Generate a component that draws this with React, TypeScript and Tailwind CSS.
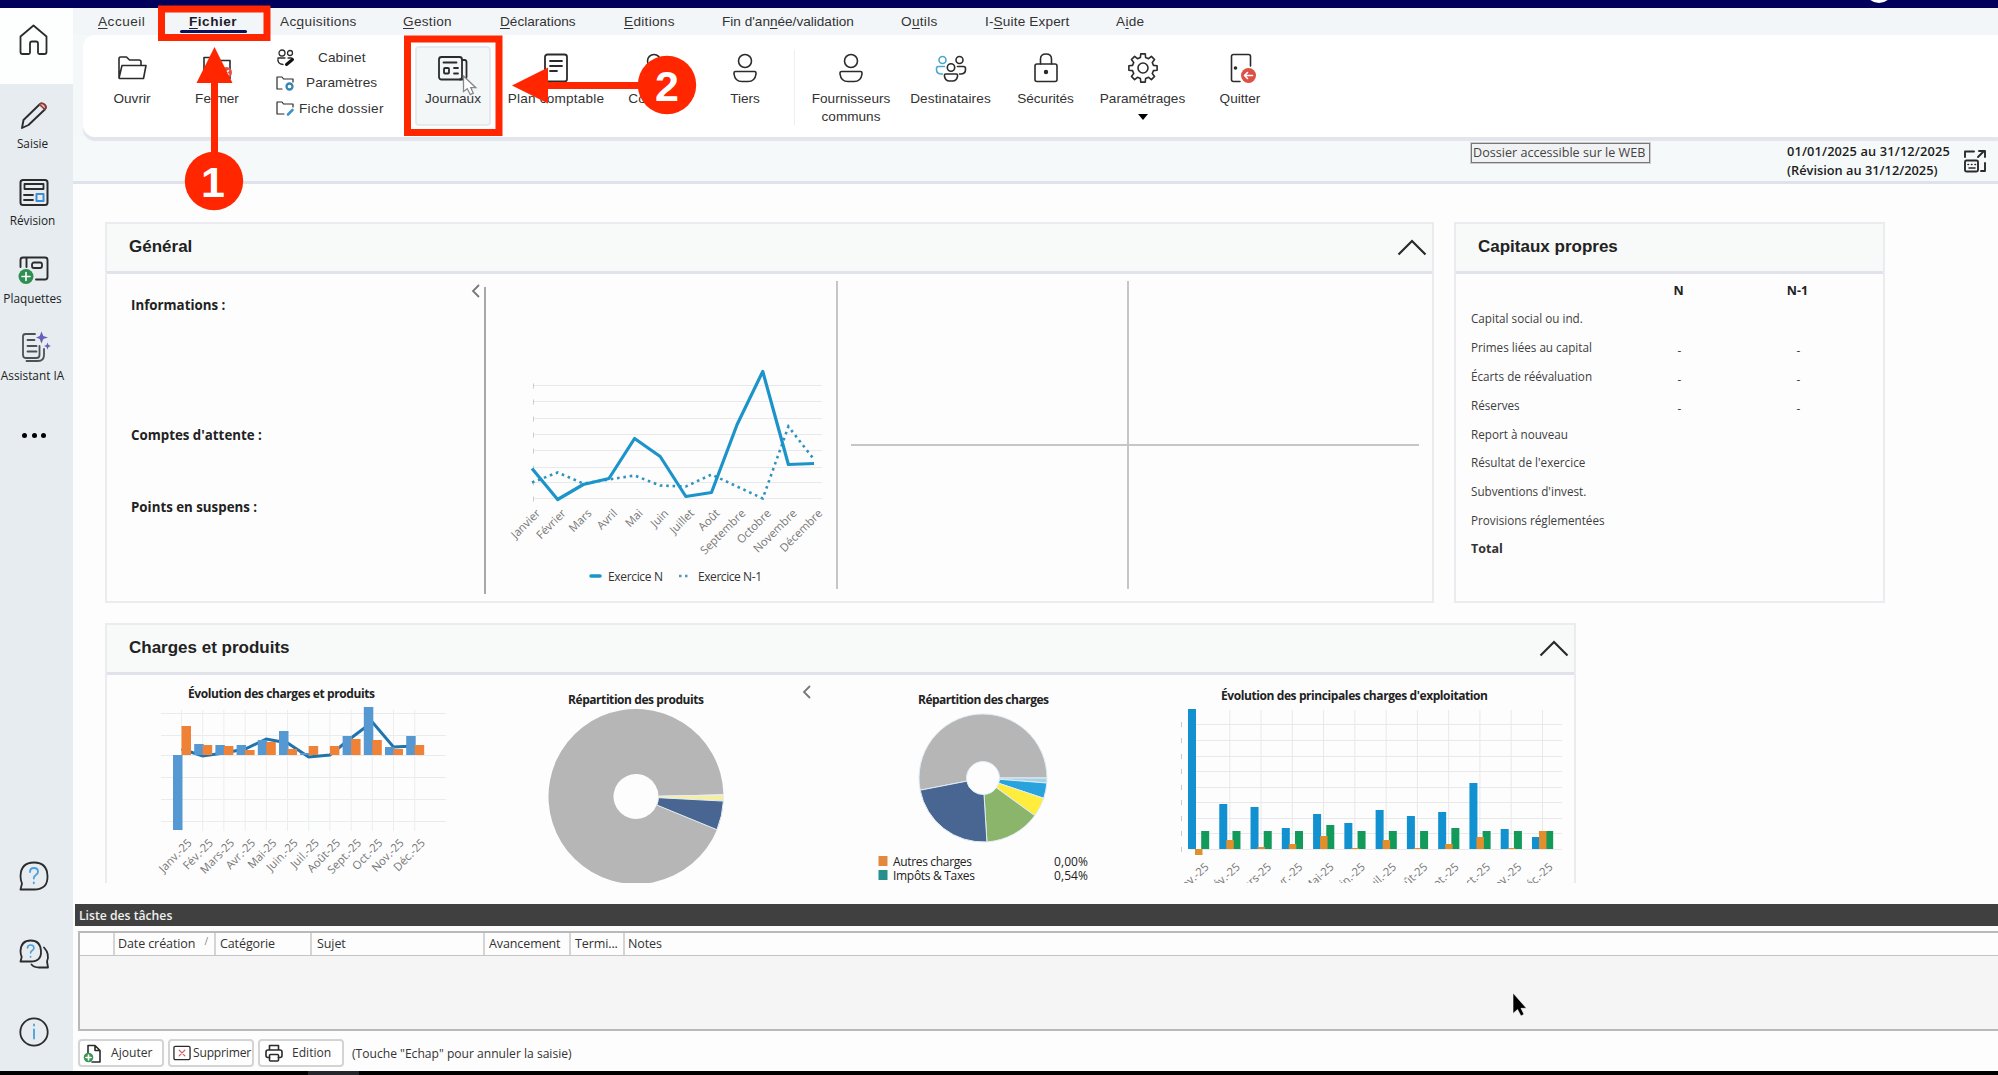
import type { ReactNode } from "react";
import { clsx } from "clsx";

type MenuItem = { before: string; key: string; after: string; width: string; active?: boolean };

const menuItems: MenuItem[] = [
  { before: "", key: "A", after: "ccueil", width: "w-[91px] tracking-[0.500px]" },
  { before: "", key: "F", after: "ichier", width: "w-[91px] tracking-[0.500px]", active: true },
  { before: "Ac", key: "q", after: "uisitions", width: "w-[123px] tracking-[0.350px]" },
  { before: "", key: "G", after: "estion", width: "w-[97px] tracking-[0.300px]" },
  { before: "", key: "D", after: "éclarations", width: "w-[124px]" },
  { before: "", key: "E", after: "ditions", width: "w-[98px] tracking-[0.300px]" },
  { before: "Fin d'an", key: "n", after: "ée/validation", width: "w-[179px]" },
  { before: "O", key: "u", after: "tils", width: "w-[84px] tracking-[0.300px]" },
  { before: "I-", key: "S", after: "uite Expert", width: "w-[131px] tracking-[0.150px]" },
  { before: "A", key: "i", after: "de", width: "w-[60px] tracking-[0.300px]" },
];

const equityRows = [
  { label: "Capital social ou ind.", n: "", n1: "" },
  { label: "Primes liées au capital", n: "-", n1: "-" },
  { label: "Écarts de réévaluation", n: "-", n1: "-" },
  { label: "Réserves", n: "-", n1: "-" },
  { label: "Report à nouveau", n: "", n1: "" },
  { label: "Résultat de l'exercice", n: "", n1: "" },
  { label: "Subventions d'invest.", n: "", n1: "" },
  { label: "Provisions réglementées", n: "", n1: "" },
];

const months = ["Janvier", "Février", "Mars", "Avril", "Mai", "Juin", "Juillet", "Août", "Septembre", "Octobre", "Novembre", "Décembre"];
const shortMonths = ["Janv.-25", "Fév.-25", "Mars-25", "Avr.-25", "Mai-25", "Juin.-25", "Juil.-25", "Août-25", "Sept.-25", "Oct.-25", "Nov.-25", "Déc.-25"];

const yearN = [468, 499, 484, 478, 438, 456, 496, 492, 424, 371, 464, 463];
const yearN1 = [482, 472, 483, 479, 475, 485, 486, 474, 486, 498, 426, 459];

// [produits, charges, résultat], y positions around the 755 baseline
const evolution = [
  [830, 726, 749], [744, 745, 756], [745, 746, 753], [745, 750, 749],
  [740, 742, 739], [731, 749, 743], [753, 746, 757], [755, 746, 755],
  [736, 739, 738], [707, 740, 722], [747, 749, 747], [736, 745, 746],
];

// [bleu, orange, vert], y positions around the 849 baseline
const expenses = [
  [709, 855, 831], [804, 840, 831], [807, 847, 831], [828, 844, 831],
  [814, 836, 825], [823, 848, 831], [810, 840, 831], [816, 848, 831],
  [812, 844, 828], [783, 837, 831], [829, 848, 831], [837, 831, 831],
];

function slice(cx: number, cy: number, r: number, hole: number, from: number, to: number) {
  const at = (radius: number, deg: number) => {
    const a = (deg * Math.PI) / 180;
    return `${(cx + radius * Math.cos(a)).toFixed(2)} ${(cy + radius * Math.sin(a)).toFixed(2)}`;
  };
  const large = to - from > 180 ? 1 : 0;
  return `M${at(hole, from)} L${at(r, from)} A${r} ${r} 0 ${large} 1 ${at(r, to)} L${at(hole, to)} A${hole} ${hole} 0 ${large} 0 ${at(hole, from)}Z`;
}

const barProps = (base: number, value: number) => ({ y: Math.min(base, value), height: Math.abs(base - value) });

/* ---------- icons ---------- */

function Icon({ children, className, box = "0 0 30 30" }: { children: ReactNode; className?: string; box?: string }) {
  return (
    <svg viewBox={box} className={clsx("shrink-0 overflow-visible", className)} fill="none" stroke="#2b2b2b" strokeWidth={1.6} strokeLinecap="round" strokeLinejoin="round">
      {children}
    </svg>
  );
}

const FolderIcon = () => (
  <Icon className="size-[30px]">
    <path d="M2 25V5.500q0-1.500 1.500-1.500h6l3 3h9.500q2 0 2 2v3M2 25l3-12.500h24L26.500 25.500H2.500" />
  </Icon>
);
const FolderCloseIcon = () => (
  <Icon className="size-[30px]">
    <path d="M2 25.500V4.500h8l3 3h15v18z" />
    <circle cx="24.500" cy="19.500" r="5.500" fill="#e0524a" stroke="none" />
    <path d="m22.500 17.500 4 4m0-4-4 4" stroke="#fff" />
  </Icon>
);
const JournalIcon = () => (
  <Icon className="size-[30px]">
    <rect x="1" y="4" width="23" height="22.500" rx="2.500" strokeWidth={1.800} />
    <path d="M24.500 7h2q2 0 2 2v14.500q0 3-2.500 3h-4M5.500 9.500h13M16 15h4M16 20.500h4" strokeWidth={1.800} />
    <rect x="6" y="15" width="5" height="5.500" rx="1" strokeWidth={1.800} />
  </Icon>
);
const DocumentIcon = () => (
  <Icon className="size-[30px]">
    <rect x="4" y="1.500" width="22" height="27" rx="2.500" strokeWidth={1.800} />
    <path d="M9 8h12M9 13h12M9 18h7" strokeWidth={1.800} />
  </Icon>
);
const UserIcon = () => (
  <Icon className="size-[30px]">
    <circle cx="15" cy="8" r="6.500" />
    <path d="M4 20q0-1.500 1.500-1.500h19q1.500 0 1.500 1.500v1q-1 7.500-8 7.500h-6q-7 0-8-7.500z" />
  </Icon>
);
const GroupIcon = () => (
  <Icon className="size-[30px]">
    <g stroke="#4fa6cf">
      <circle cx="6.500" cy="7" r="3.500" />
      <path d="M8.500 13.500H2.500q-2 0-2 2v1q0 4 4 4.500h2" />
    </g>
    <circle cx="23.500" cy="7" r="3.500" />
    <path d="M21.500 13.500h6q2 0 2 2v1q0 4-4 4.500h-2" />
    <circle cx="15" cy="14.500" r="3.700" />
    <path d="M8.500 22q0-1 1-1h11q1 0 1 1v1.500q-1 4.500-5 4.500h-3q-4 0-5-4.500z" />
  </Icon>
);
const LockIcon = () => (
  <Icon className="size-[30px]">
    <rect x="4" y="11" width="22" height="17.500" rx="2" />
    <path d="M9.500 11V6q0-5 5.500-5t5.500 5v5" />
    <circle cx="15" cy="19" r="1.400" fill="#2b2b2b" />
  </Icon>
);

// eight-toothed outline, each tooth is four points of a polar path
const gearPath = (() => {
  const pts: string[] = [];
  for (let i = 0; i < 8; i++) {
    for (const [r, off] of [[10.8, -14], [14.3, -9], [14.3, 9], [10.8, 14]]) {
      const a = ((i * 45 + off) * Math.PI) / 180;
      pts.push(`${(15 + r * Math.cos(a)).toFixed(2)} ${(15 + r * Math.sin(a)).toFixed(2)}`);
    }
  }
  return `M${pts.join("L")}Z`;
})();

const GearIcon = () => (
  <Icon className="size-[30px]">
    <path d={gearPath} />
    <circle cx="15" cy="15" r="5" />
  </Icon>
);
const DoorIcon = () => (
  <Icon className="size-[30px]">
    <path d="M15 28.500H8.500q-2 0-2-2V3.500q0-2 2-2h15q2 0 2 2V13" />
    <circle cx="10.500" cy="15" r="1" fill="#2b2b2b" />
    <circle cx="23.500" cy="22.500" r="7.500" fill="#dc5046" stroke="none" />
    <path d="M27.500 22.500h-8m3-3-3 3 3 3" stroke="#fff" />
  </Icon>
);
const HomeIcon = () => (
  <Icon className="size-[30px]">
    <path d="M1.500 12.500 14.500 1.500l13 11V28q0 2-2 2H20.500q-1.500 0-1.500-1.500V19.500q0-2-2-2H13q-2 0-2 2V28.500q0 1.500-1.500 1.500H3.500q-2 0-2-2z" strokeWidth={1.800} />
  </Icon>
);
const PencilIcon = () => (
  <Icon className="size-[30px]">
    <path d="M4.500 20 20.500 4.500q2.500-2.200 5 .2t.3 4.800L9.500 25l-6.500 3z" strokeWidth={1.900} />
    <path d="m20.500 4.500 5.300 5q2.200-2.400-.3-4.800t-5-.2z" fill="#f0b8b8" stroke="#8d3a3a" />
  </Icon>
);
const RevisionIcon = () => (
  <Icon className="size-[30px]">
    <rect x="1.500" y="3" width="27" height="25" rx="2.500" strokeWidth={2} />
    <rect x="5.500" y="7" width="19" height="5" strokeWidth={1.800} />
    <path d="M5 18h9M5 23h9" strokeWidth={1.800} />
    <rect x="17.500" y="17" width="7" height="7" stroke="#3f8fd0" strokeWidth={2} />
  </Icon>
);
const PlaquettesIcon = () => (
  <Icon className="size-[30px]">
    <path d="M1.500 12V5q0-2.500 2.500-2.500h22q2.500 0 2.500 2.500v17q0 2.500-2.500 2.500H17M7.500 3v9" strokeWidth={1.900} />
    <rect x="13" y="7.500" width="10" height="5.500" rx="2" strokeWidth={1.800} />
    <circle cx="7" cy="21.500" r="7.500" fill="#2f8f52" stroke="none" />
    <path d="M7 17.500v8M3 21.500h8" stroke="#fff" />
  </Icon>
);
const AssistantIcon = () => (
  <Icon className="h-[32px] w-[30px]" box="0 0 30 32">
    <path d="M16 4H6.500Q4 4 4 6.500v18Q4 28 6.500 28h11q3 0 3-3v-9M7.500 31H19q6 0 6-6v-6M8.500 10h7M8.500 16h9M8.500 21.500h9" stroke="#4a5157" strokeWidth={1.800} />
    <path d="M22.500 1.500 24.300 6l4.700 1.500-4.700 1.500-1.800 4.500L20.700 9 17 7.500 20.700 6zM28.500 12.500l1 2.500 2.500 1-2.500 1-1 2.500-1-2.500-2.500-1 2.500-1z" fill="#6a5fb8" stroke="none" />
  </Icon>
);
const HelpIcon = () => (
  <Icon className="size-[30px]">
    <path d="M1.500 28.500 3 22.500Q1.500 19 1.500 15 2 1.500 15 1.500T28.500 15 15 28.500z" strokeWidth={1.800} />
    <path d="M11 11q0-4 4-4t4 3.700q0 2-2.200 3.300T14.800 17.500M14.800 21.500v.8" stroke="#4b9fd8" strokeWidth={1.800} />
  </Icon>
);
const ChatIcon = () => (
  <Icon className="size-[30px]">
    <path d="M1.500 22.500 2.700 18Q1.500 15.500 1.500 12 2 1.500 11.700 1.500T22 12 11.700 22.500z" strokeWidth={1.800} />
    <path d="M8.500 9q0-3 3.200-3t3.200 3q0 1.500-1.700 2.500T11.600 14M11.600 17.500v.6" stroke="#4b9fd8" strokeWidth={1.600} />
    <path d="M25 8.500Q31 15 28 22.500l1 6H20q-5 0-7.500-3" strokeWidth={1.800} />
  </Icon>
);
const InfoIcon = () => (
  <Icon className="size-[30px]">
    <circle cx="15" cy="15" r="13.700" strokeWidth={1.800} />
    <path d="M15 12.500v9M15 7.500v1" stroke="#4b9fd8" strokeWidth={1.800} />
  </Icon>
);
const ChevronUp = () => (
  <svg viewBox="0 0 30 17" className="h-[17px] w-[30px]" fill="none" stroke="#2a2a2a" strokeWidth={2.200}>
    <path d="m1.500 15.500 13.500-13.500 13.500 13.500" />
  </svg>
);
const ChevronLeft = () => (
  <svg viewBox="0 0 9 14" className="h-[14px] w-[9px]" fill="none" stroke="#777" strokeWidth={1.800}>
    <path d="M8 1 2 7l6 6" />
  </svg>
);

/* ---------- chrome ---------- */

function SideButton({ icon, label, className }: { icon: ReactNode; label?: string; className: string }) {
  return (
    <button type="button" className={clsx("flex w-[68px] shrink-0 flex-col items-center", className)}>
      {icon}
      {label && <span className="mt-[5px] mr-[3px] text-[11.800px] leading-4 whitespace-nowrap text-[#222]">{label}</span>}
    </button>
  );
}

function Sidebar() {
  return (
    <aside className="flex w-[73px] shrink-0 flex-col bg-[#e6ecf0]">
      <div className="h-[76px] bg-[#fdfefe] pt-[16px]">
        <SideButton className="h-[32px]" icon={<HomeIcon />} />
      </div>
      <SideButton className="mt-[16px] h-[77px]" icon={<PencilIcon />} label="Saisie" />
      <SideButton className="h-[78px]" icon={<RevisionIcon />} label="Révision" />
      <SideButton className="h-[75px]" icon={<PlaquettesIcon />} label="Plaquettes" />
      <SideButton className="h-[98px]" icon={<AssistantIcon />} label="Assistant IA" />
      <div className="flex w-[68px] justify-center gap-[4.500px] pt-[5px]">
        <span className="size-[5px] rounded-full bg-black" />
        <span className="size-[5px] rounded-full bg-black" />
        <span className="size-[5px] rounded-full bg-black" />
      </div>
      <div className="mt-auto flex flex-col gap-[48px] pb-[24px]">
        <SideButton className="h-[30px]" icon={<HelpIcon />} />
        <SideButton className="h-[30px]" icon={<ChatIcon />} />
        <SideButton className="h-[30px]" icon={<InfoIcon />} />
      </div>
    </aside>
  );
}

function MenuBar() {
  return (
    <nav className="flex h-[27px] shrink-0 items-start bg-[#f3f6f8] pt-[6px] pl-[25px] font-['Liberation_Sans',sans-serif] text-[13.600px] leading-4 text-[#333]">
      {menuItems.map((item) => (
        <div key={item.after} className={clsx("shrink-0 whitespace-nowrap", item.width)}>
          <span className={clsx(item.active && "font-bold text-[#1c1c2e]")}>
            {item.before}
            <span className="underline underline-offset-2">{item.key}</span>
            {item.after}
          </span>
          {item.active && <div className="-ml-[9px] h-[3px] w-[67px] rounded-full bg-[#0b1058]" />}
        </div>
      ))}
    </nav>
  );
}

function Tool({ icon, label, className, children }: { icon: ReactNode; label: string; className: string; children?: ReactNode }) {
  return (
    <div className={clsx("flex shrink-0 flex-col items-center pt-[18px]", className)}>
      {icon}
      <span className="mt-[7px] text-center leading-[17.500px] whitespace-pre">{label}</span>
      {children}
    </div>
  );
}

function Ribbon() {
  return (
    <div className="relative ml-[10px] flex h-[102px] shrink-0 rounded-l-xl bg-white pl-[6px] font-['Liberation_Sans',sans-serif] text-[13.600px] text-[#333] shadow-[0_4px_1px_#e3e5ed]">
      <Tool className="w-[86px]" icon={<FolderIcon />} label="Ouvrir" />
      <Tool className="w-[84px]" icon={<FolderCloseIcon />} label="Fermer" />
      <div className="flex w-[145px] shrink-0 flex-col gap-[6.500px] pt-[13px] pl-[17px] leading-4 whitespace-nowrap">
        <div className="flex items-center gap-[23px]">
          <Icon className="size-[19px]" box="0 0 19 17">
            <circle cx="6" cy="4" r="3" strokeWidth={1.300} />
            <circle cx="14" cy="4" r="2.500" strokeWidth={1.300} />
            <path d="M9 9H2q-1 6 5 6.500M12 9h4" strokeWidth={1.300} />
            <path d="m10.500 15.500 6-5" stroke="#111" strokeWidth={3} />
          </Icon>
          <span className="tracking-[0.100px]">Cabinet</span>
        </div>
        <div className="flex items-center gap-[11px]">
          <Icon className="size-[19px]" box="0 0 19 17">
            <path d="M1 14V2h5l1.500 2H17v3M1 14h5" strokeWidth={1.200} />
            <circle cx="13.500" cy="11.500" r="3" stroke="#3585b5" strokeWidth={2.300} />
          </Icon>
          <span className="tracking-[0.100px]">Paramètres</span>
        </div>
        <div className="flex items-center gap-[4px]">
          <Icon className="size-[19px]" box="0 0 19 17">
            <path d="M1 14V2h5l1.500 2H17v3M1 14h7" strokeWidth={1.200} />
            <path d="m12 14.500 4.500-4.500" stroke="#3f94cf" strokeWidth={2.600} />
          </Icon>
          <span className="tracking-[0.300px]">Fiche dossier</span>
        </div>
      </div>
      <div className="flex w-[98px] shrink-0 justify-center pt-[11px]">
        <div className="flex h-[80px] w-[76px] flex-col items-center rounded-sm border-2 border-[#e4eaee] bg-[#f3f7f8] pt-[5px]">
          <JournalIcon />
          <span className="mt-[7px] leading-[17.500px]">Journaux</span>
        </div>
      </div>
      <Tool className="w-[108px] tracking-[0.200px]" icon={<DocumentIcon />} label="Plan comptable" />
      <Tool className="w-[88px]" icon={<UserIcon />} label="Contrats" />
      <Tool className="w-[94px]" icon={<UserIcon />} label="Tiers" />
      <div className="mt-[15px] ml-[2px] h-[75px] w-px shrink-0 bg-[#eceef0]" />
      <Tool className="w-[112px]" icon={<UserIcon />} label={"Fournisseurs\ncommuns"} />
      <Tool className="w-[87px] tracking-[0.100px]" icon={<GroupIcon />} label="Destinataires" />
      <Tool className="w-[103px]" icon={<LockIcon />} label="Sécurités" />
      <Tool className="w-[91px]" icon={<GearIcon />} label="Paramétrages">
        <div className="mt-[6px] h-0 w-0 border-x-[5px] border-t-[6px] border-x-transparent border-t-black" />
      </Tool>
      <Tool className="w-[104px]" icon={<DoorIcon />} label="Quitter" />
    </div>
  );
}

function StatusBand() {
  return (
    <div className="flex h-[47px] shrink-0 border-b-[3px] border-[#e0e2eb] bg-[#f5f9f9] pt-[6px]">
      <div className="ml-[1398px] h-[20px] w-[179px] shrink-0 border border-[#777] bg-[#f1f2f3] pl-[1px] text-[12.600px] leading-[17px] whitespace-nowrap text-[#444] outline outline-[#ccc]">
        Dossier accessible sur le WEB
      </div>
      <div className="ml-[137px] w-[177px] shrink-0 text-[12.800px] leading-[19px] font-semibold tracking-[0.150px] whitespace-nowrap text-[#1c1c1c]">
        <p className="-mt-px">01/01/2025 au 31/12/2025</p>
        <p className="tracking-normal">(Révision au 31/12/2025)</p>
      </div>
      <Icon className="mt-[7px] h-[23px] w-[22px]" box="0 0 22 23">
        <path d="M1 7V1.500h9M14 7l6-6M15 1h6v6M21 13v8h-4" strokeWidth={1.900} />
        <rect x="1" y="10.500" width="13" height="11" rx="1.500" strokeWidth={1.900} />
        <path d="M4 14.500h.5m3 0h.5m3 0h.5M5 18h6" />
      </Icon>
    </div>
  );
}

/* ---------- dashboard ---------- */

function CardHeader({ title, collapsible }: { title: string; collapsible?: boolean }) {
  return (
    <header className="flex h-[50px] shrink-0 items-center justify-between border-b-[3px] border-[#e1e3eb] bg-[#f8faf9] pr-[5px] pb-px pl-[22px]">
      <h2 className="font-['Liberation_Sans',sans-serif] text-[17px] font-bold text-[#222]">{title}</h2>
      {collapsible && <ChevronUp />}
    </header>
  );
}

function YearChart() {
  const x = (i: number) => 532 + i * 25.64;
  const points = (values: number[]) => values.map((y, i) => `${x(i)},${y}`).join(" ");
  return (
    <svg viewBox="486 273.500 350 325" className="h-[325px] w-[350px] shrink-0" fontSize="12.500" fill="#777">
      {[385, 401, 418, 434, 450, 467, 482, 498].map((y) => (
        <g key={y}>
          <path d={`M533 ${y}H822`} stroke="#e9e9e9" />
          <path d={`M533.500 ${y - 2}v5`} stroke="#ccc" />
        </g>
      ))}
      <polyline points={points(yearN1)} fill="none" stroke="#2f93bd" strokeWidth="2.600" strokeDasharray="2.600 3.800" />
      <polyline points={points(yearN)} fill="none" stroke="#1c94c9" strokeWidth="3.200" strokeLinejoin="round" />
      {months.map((m, i) => (
        <text key={m} fontSize="11.300" textAnchor="end" transform={`translate(${x(i) + 9} 513.500) rotate(-45)`}>{m}</text>
      ))}
      <path d="M591 575.500h9" stroke="#1c94c9" strokeWidth="3.500" strokeLinecap="round" />
      <path d="M679 575.500h10" stroke="#5b93b5" strokeWidth="2.500" strokeDasharray="2.500 3.500" />
      <g fill="#333" fontSize="12">
        <text x="608" y="580" textLength="55">Exercice N</text>
        <text x="698" y="580" textLength="64">Exercice N-1</text>
      </g>
    </svg>
  );
}

function GeneralCard() {
  return (
    <section className="flex h-[381px] w-[1329px] shrink-0 flex-col border-2 border-[#ebecef]">
      <CardHeader title="Général" collapsible />
      <div className="flex min-h-0 flex-1">
        <div className="w-[364px] shrink-0 pt-[20px] pl-[24px] text-[13.300px] leading-[22px] font-bold text-[#222]">
          <p>Informations :</p>
          <p className="mt-[108px]">Comptes d'attente :</p>
          <p className="mt-[50px]">Points en suspens :</p>
        </div>
        <div className="w-[13px] shrink-0 pt-[10px]">
          <ChevronLeft />
        </div>
        <div className="mt-[13px] h-[307px] w-[2px] shrink-0 bg-[#a9a9a9]" />
        <YearChart />
        <div className="mt-[7px] h-[308px] w-[2px] shrink-0 bg-[#c6c6c6]" />
        {/* four empty quadrants */}
        <div className="mt-[7px] ml-[13px] grid h-[308px] w-[568px] shrink-0 grid-cols-[278px_1fr] grid-rows-[165px_1fr]">
          <div className="border-r-2 border-b-2 border-[#c6c6c6]" />
          <div className="border-b-2 border-[#c6c6c6]" />
          <div className="border-r-2 border-[#c6c6c6]" />
        </div>
      </div>
    </section>
  );
}

function EquityCard() {
  return (
    <section className="flex h-[381px] w-[431px] shrink-0 flex-col border-2 border-[#ebecef]">
      <CardHeader title="Capitaux propres" />
      <div className="grid grid-cols-[148px_119px_119px] pt-[7px] pl-[15px] text-[11.700px] leading-[20px] text-[#3d3d3d]">
        <div className="h-[27px]" />
        <div className="text-center text-[12.500px] font-bold text-[#222]">N</div>
        <div className="text-center text-[12.500px] font-bold text-[#222]">N-1</div>
        {equityRows.map((row) => (
          <div key={row.label} className="contents">
            <div className="h-[28.900px] whitespace-nowrap">{row.label}</div>
            <div className="pt-[3px] pl-[2px] text-center">{row.n}</div>
            <div className="pt-[3px] pl-[2px] text-center">{row.n1}</div>
          </div>
        ))}
        <div className="text-[12.500px] font-bold text-[#333]">Total</div>
      </div>
    </section>
  );
}

function EvolutionChart() {
  const x = (i: number) => 181.5 + i * 21.2;
  return (
    <svg viewBox="107 675 430 208" className="h-[208px] w-[430px] shrink-0" fontSize="12" fill="#777">
      <text x="188" y="698" fontWeight="bold" fill="#222" textLength="187">Évolution des charges et produits</text>
      {[713, 735, 755, 777, 799, 821].map((y) => <path key={y} d={`M161 ${y}.5H446`} stroke="#e8ecee" />)}
      {evolution.map((_, i) => <path key={i} d={`M${x(i)} 710V831`} stroke="#ebeeef" />)}
      <polyline points={evolution.map((v, i) => `${x(i)},${v[2]}`).join(" ")} fill="none" stroke="#1f74ad" strokeWidth="3" />
      {evolution.map(([income, cost], i) => (
        <g key={i}>
          <rect x={x(i) - 8.5} width="9.500" {...barProps(755, income)} fill="#5698d2" />
          <rect x={x(i)} width="9.500" {...barProps(755, cost)} fill="#f08238" />
        </g>
      ))}
      {shortMonths.map((m, i) => (
        <text key={m} fontSize="11.300" textAnchor="end" transform={`translate(${x(i) + 11} 843.500) rotate(-46)`}>{m}</text>
      ))}
    </svg>
  );
}

function IncomeDonut() {
  const arc = (from: number, to: number) => slice(636, 796.5, 87.5, 22.5, from, to);
  return (
    <svg viewBox="537 675 262 208" className="h-[208px] w-[262px] shrink-0" fontSize="12" stroke="#e6eef5">
      <text x="568" y="704" fontWeight="bold" fill="#222" stroke="none" textLength="136">Répartition des produits</text>
      <path d={arc(22.3, 358.5)} fill="#b6b6b6" stroke="none" />
      <path d={arc(359, 363)} fill="#f6efa0" />
      <path d={arc(3, 22.3)} fill="#486691" />
    </svg>
  );
}

function ExpenseDonut() {
  const arc = (from: number, to: number) => slice(983, 778, 64, 16.5, from, to);
  return (
    <svg viewBox="811 675 360 208" className="h-[208px] w-[360px] shrink-0" fontSize="12" stroke="#e0edf5">
      <text x="918" y="704" fontWeight="bold" fill="#222" stroke="none" textLength="131">Répartition des charges</text>
      <path d={arc(169, 360)} fill="#b6b6b6" />
      <path d={arc(0, 4.5)} fill="#a8d0e6" />
      <path d={arc(4.5, 18.5)} fill="#29a3dd" />
      <path d={arc(18.5, 36)} fill="#ffec3d" />
      <path d={arc(36, 86.5)} fill="#8bb56a" />
      <path d={arc(86.5, 169)} fill="#486691" />
      <g stroke="none" fill="#222">
        <rect x="878.500" y="856" width="9" height="10" fill="#e3883f" />
        <text x="893" y="866" textLength="79">Autres charges</text>
        <text x="1054" y="866" textLength="34">0,00%</text>
        <rect x="878.500" y="870" width="9" height="10" fill="#288f8b" />
        <text x="893" y="880" textLength="82">Impôts &amp; Taxes</text>
        <text x="1054" y="880" textLength="34">0,54%</text>
      </g>
    </svg>
  );
}

function MainExpensesChart() {
  const x = (i: number) => 1198.5 + i * 31.27;
  return (
    <svg viewBox="1171 675 400 208" className="h-[208px] w-[400px] shrink-0" fontSize="12" fill="#777">
      <text x="1221" y="700" fontWeight="bold" fill="#222" textLength="267">Évolution des principales charges d'exploitation</text>
      {[724, 740, 756, 771, 787, 802, 818, 833, 849].map((y) => (
        <g key={y}>
          <path d={`M1190 ${y}.5H1562`} stroke="#e9e9e9" />
          <path d={`M1181.500 ${y - 2}v5`} stroke="#ccc" />
        </g>
      ))}
      {expenses.map((_, i) => i > 0 && <path key={i} d={`M${x(i)} 710V849`} stroke="#e9e9e9" />)}
      {expenses.map(([blue, orange, green], i) => (
        <g key={i}>
          <rect x={x(i) - 10.5} width="8" {...barProps(849, blue)} fill="#1191d0" />
          <rect x={x(i) + 2.7} width="8" {...barProps(849, green)} fill="#129a5b" />
          <rect x={x(i) - 3.5} width="7.500" {...barProps(849, orange)} fill="#e08f2c" />
        </g>
      ))}
      {shortMonths.map((m, i) => (
        <text key={m} fontSize="11.300" textAnchor="end" transform={`translate(${x(i) + 11} 868) rotate(-42)`}>{m}</text>
      ))}
    </svg>
  );
}

function ChargesCard() {
  return (
    <section className="flex h-[260px] w-[1471px] shrink-0 flex-col overflow-hidden border-2 border-b-0 border-[#ebecef]">
      <CardHeader title="Charges et produits" collapsible />
      <div className="flex">
        <EvolutionChart />
        <IncomeDonut />
        <div className="w-[12px] shrink-0 pt-[10px] pl-[3px]">
          <ChevronLeft />
        </div>
        <ExpenseDonut />
        <MainExpensesChart />
      </div>
    </section>
  );
}

/* ---------- tasks ---------- */

const taskButton = "flex h-[28px] w-[86px] items-center rounded-[4px] border-2 border-[#d4d4d4] bg-white whitespace-nowrap";

function TaskList() {
  return (
    <section className="flex h-[167px] shrink-0 flex-col pl-[2px] text-[12.500px] text-[#333]">
      <h2 className="h-[22px] bg-[#404040] pl-[4px] text-[12.200px] leading-[23px] font-semibold text-[#f0f0f0]">Liste des tâches</h2>
      <div className="mt-[5px] ml-[3px] flex h-[100px] flex-col border-2 border-r-0 border-[#b9b9b9] bg-[#f5f5f5]">
        <div className="flex h-[23px] shrink-0 border-b border-[#c4c4c4] bg-[#fdfdfd] leading-[21px] tracking-[-0.100px] whitespace-nowrap">
          <div className="w-[35px] border-r-2 border-[#d5d5d5]" />
          <div className="flex w-[101px] justify-between border-r-2 border-[#d5d5d5] pr-[6px] pl-[3px]">
            Date création
            <span className="text-[10px] leading-[17px] text-[#888]">/</span>
          </div>
          <div className="w-[96px] border-r-2 border-[#d5d5d5] pl-[4px]">Catégorie</div>
          <div className="w-[173px] border-r-2 border-[#d5d5d5] pl-[5px]">Sujet</div>
          <div className="w-[86px] border-r-2 border-[#d5d5d5] pl-[4px]">Avancement</div>
          <div className="w-[54px] border-r-2 border-[#d5d5d5] pl-[4px]">Termi...</div>
          <div className="pl-[3px]">Notes</div>
        </div>
      </div>
      <div className="mt-[8px] ml-[3px] flex gap-[4px] text-[12.100px]">
        <button type="button" className={clsx(taskButton, "gap-[9px] pl-[3px]")}>
          <Icon className="size-[19px]" box="0 0 19 19">
            <path d="M5 9V1.500h7l5 5V18H9M12 1.500v5h5" />
            <circle cx="5.500" cy="13.500" r="4.800" fill="#3c9457" stroke="none" />
            <path d="M5.500 11v5M3 13.500h5" stroke="#fff" />
          </Icon>
          Ajouter
        </button>
        <button type="button" className={clsx(taskButton, "gap-[2px] pl-[3px]")}>
          <Icon className="h-[16px] w-[18px]" box="0 0 19 16">
            <rect x="1" y="1" width="17" height="14" rx="1.500" strokeWidth={1.400} />
            <path d="m6.500 5 6 6m0-6-6 6" stroke="#d05a5a" strokeWidth={1.300} />
          </Icon>
          <span className="tracking-[-0.200px]">Supprimer</span>
        </button>
        <button type="button" className={clsx(taskButton, "gap-[9px] pl-[5px]")}>
          <Icon className="size-[18px]" box="0 0 18 18">
            <path d="M4.500 6V1.500h9V6M4.500 13.500H3q-2 0-2-2V8q0-2 2-2h12q2 0 2 2v3.500q0 2-2 2h-1.500" />
            <rect x="4.500" y="10.500" width="9" height="6.500" rx="1" />
          </Icon>
          Edition
        </button>
        <p className="pl-[4px] leading-[29px]">(Touche "Echap" pour annuler la saisie)</p>
      </div>
    </section>
  );
}

/* ---------- overlays ---------- */

function Annotations() {
  return (
    <svg viewBox="0 0 1998 1075" className="pointer-events-none absolute inset-0 h-[1075px] w-[1998px]">
      <path d="M463.500 76v15.500l3.800-2.800 3 6 3-1.500-2.500-5.500h5z" fill="#fff" stroke="#888" strokeWidth="1.300" />
      <path d="M1513 993v20.500l4.500-4 3.500 6.500 3-1.700-3-6h5.500z" fill="#000" stroke="#fff" strokeWidth=".6" />
      <g fill="none" stroke="#ff2600" strokeWidth="7">
        <path d="M161.500 9h105.500v28.500h-105.500zM407.500 39h91.500v93.500h-91.500zM214.500 80v80M545 85.500h100" />
      </g>
      <g fill="#ff2600">
        <path d="M214.500 47 232.500 83h-36zM512 85.500l36-18v36z" />
        <circle cx="214" cy="181" r="29.200" />
        <circle cx="667" cy="85" r="29.200" />
      </g>
      <g fill="#fff" fontFamily="Liberation Sans, sans-serif" fontSize="43" fontWeight="bold" textAnchor="middle">
        <text x="213" y="196.500">1</text>
        <text x="667" y="100.500">2</text>
      </g>
    </svg>
  );
}

export default function App() {
  return (
    <div className="relative flex h-[1075px] w-[1998px] flex-col overflow-hidden bg-[#fdfdfd] font-['Open_Sans','Noto_Sans',sans-serif]">
      <div className="flex h-[8px] shrink-0 justify-end overflow-hidden bg-[#00005c] pr-[105px]">
        <div className="-mt-[25px] size-[28px] rounded-full bg-white" />
      </div>
      <div className="flex min-h-0 flex-1">
        <Sidebar />
        <div className="flex min-w-0 flex-1 flex-col">
          <div className="flex shrink-0 flex-col bg-[#f5f8f9]">
            <MenuBar />
            <Ribbon />
          </div>
          <StatusBand />
          <main className="flex flex-1 flex-col gap-[20px] pt-[38px] pl-[32px]">
            <div className="flex gap-[20px]">
              <GeneralCard />
              <EquityCard />
            </div>
            <ChargesCard />
          </main>
          <TaskList />
        </div>
      </div>
      <div className="flex h-[4px] shrink-0 bg-black pl-[308px]">
        <div className="h-full w-[51px] bg-[#25252c]" />
      </div>
      <Annotations />
    </div>
  );
}
